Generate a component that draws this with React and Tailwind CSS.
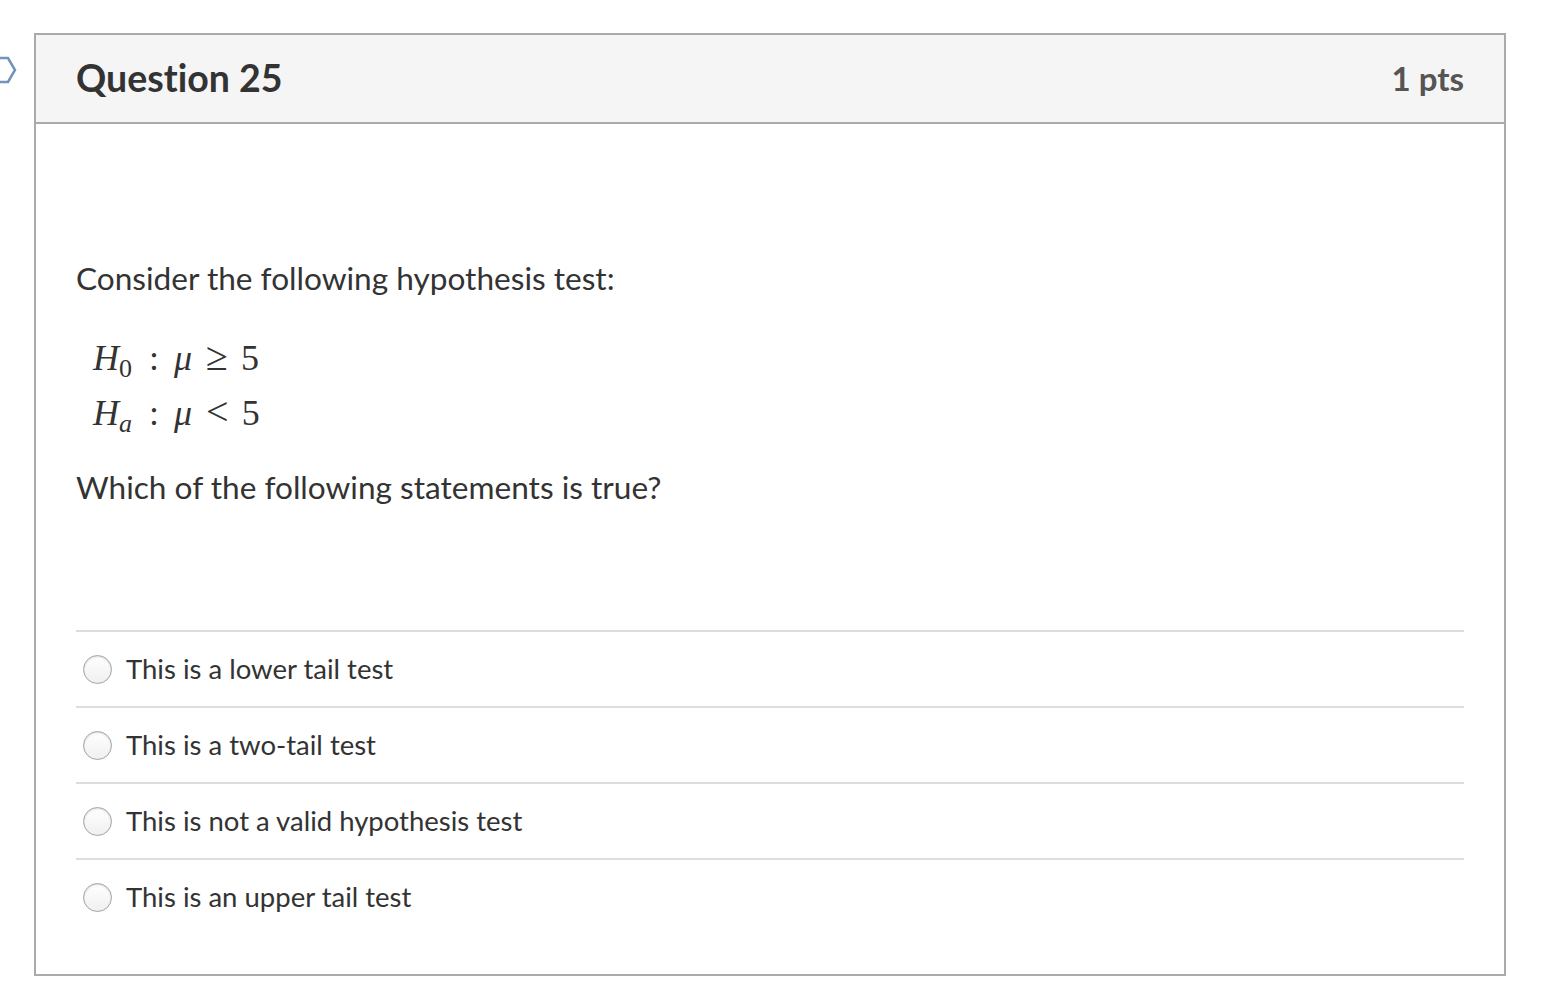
import React from 'react';

const answers = [
    'This is a lower tail test',
    'This is a two-tail test',
    'This is not a valid hypothesis test',
    'This is an upper tail test',
];

// Radio answer row
const AnswerRow = ({ label }) => {
    return (
        <div className="flex items-center h-[76px] border-t-2 border-[#dddddd]">
            <span className="ml-[7px] w-[29px] h-[29px] rounded-full border border-[#a3a3a3] bg-gradient-to-b from-white to-[#f0f0f0] shadow-[inset_0_1px_2px_rgba(0,0,0,0.15)]" />
            <span className="ml-[14px] text-[27.5px] text-[#333333]">{label}</span>
        </div>
    );
};

// One line of the hypothesis pair
const MathLine = ({ sub, subItalic, rel }) => {
    return (
        <div className="flex items-baseline h-[55px] overflow-visible">
            <i>H</i>
            {subItalic ? (
                <i className="text-[26px] translate-y-[7px]">{sub}</i>
            ) : (
                <span className="text-[26px] translate-y-[7px]">{sub}</span>
            )}
            <span className="ml-[17px]">:</span>
            <i className="ml-[15px]">μ</i>
            <span className="ml-[14px] text-[40px] leading-[55px]">{rel}</span>
            <span className="ml-[13px]">5</span>
        </div>
    );
};

export default function App() {
    return (
        <div className="relative min-h-screen bg-white font-['Lato','Liberation_Sans',sans-serif] [font-variant-ligatures:none]">
            {/* collapsed nav arrow */}
            <svg className="absolute left-0 top-[56px]" width="18" height="28" viewBox="0 0 18 28">
                <path d="M-4 2 H8 L15 14 L8 26 H-4" fill="none" stroke="#7393ba" strokeWidth="2.5" />
            </svg>

            <div className="pt-[33px] pl-[34px] w-[1506px]">
                <div className="border-2 border-[#aaaaaa]">
                    <div className="flex items-center justify-between h-[89px] px-[40px] bg-[#f5f5f5] border-b-2 border-[#aaaaaa]">
                        <h2 className="text-[37.5px] font-bold text-[#333333]">Question 25</h2>
                        <span className="text-[33px] font-bold text-[#555555]">1 pts</span>
                    </div>

                    <div className="px-[40px] pt-[134px] pb-[40px]">
                        <p className="text-[31.6px] leading-[40px] text-[#333333]">Consider the following hypothesis test:</p>

                        <div className="mt-[31px] ml-[17px] font-['Liberation_Serif',serif] text-[36px] leading-[55px] text-[#333333]">
                            <MathLine sub="0" rel="≥" />
                            <MathLine sub="a" subItalic rel="<" />
                        </div>

                        <p className="mt-[28px] text-[31.6px] leading-[40px] text-[#333333]">Which of the following statements is true?</p>

                        <div className="mt-[123px]">
                            {answers.map((a) => (
                                <AnswerRow key={a} label={a} />
                            ))}
                        </div>
                    </div>
                </div>
            </div>
        </div>
    );
}
